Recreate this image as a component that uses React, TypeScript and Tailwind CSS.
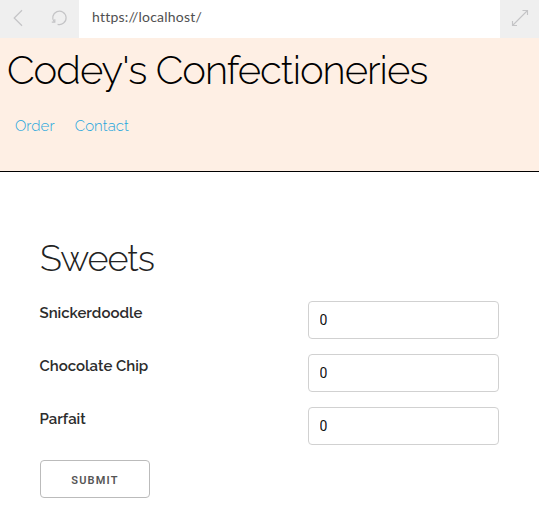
import React from 'react';

const sweets = ['Snickerdoodle', 'Chocolate Chip', 'Parfait'];

function BrowserBar() {
  return (
    <div className="flex h-[38px] bg-[#efefef] text-[#c4c4c6]">
      <div className="flex w-[79px] shrink-0">
        <svg width="79" height="38" viewBox="0 0 79 38" fill="none" stroke="currentColor">
          <path d="M22 10.3 L14.2 18 L22 25.7" strokeWidth="1.2" />
          <path d="M54.3 22.2 A6.7 6.7 0 1 1 57.6 24.3" strokeWidth="1.2" />
          <path d="M51.8 22.2 H54.8 V19.2" strokeWidth="1.2" />
        </svg>
      </div>
      <div className="flex grow items-center bg-white pb-[5px] pl-[13px] font-['Lato',sans-serif] text-[14px] tracking-[0.22px] text-[#505050]">
        https://localhost/
      </div>
      <svg width="39" height="38" viewBox="0 0 39 38" fill="none" stroke="currentColor" className="shrink-0">
        <path d="M12.5 25.5 L27.5 10.5 M22.5 10.5 H27.5 V15 M12.5 21 V25.5 H17" strokeWidth="1.1" />
      </svg>
    </div>
  );
}

export default function App() {
  return (
    <div className="h-[523px] w-[539px] overflow-hidden bg-white font-['Raleway','Lato',sans-serif] text-[#222]">
      <BrowserBar />
      <header className="h-[134px] border-b border-black bg-[#feefe4] pl-[7px]">
        <h1 className="pt-2 text-[40px] leading-[48px] font-light tracking-[-1px] whitespace-nowrap text-black">
          Codey's Confectioneries
        </h1>
        <nav className="flex gap-5 pt-5 pl-2 text-[15px] leading-6 font-light tracking-[0.1px] text-[#1ea6dc]">
          <a>Order</a>
          <a>Contact</a>
        </nav>
      </header>
      <main className="px-10 pt-[64px]">
        <h2 className="text-[36px] leading-[45px] font-light tracking-[-1px]">Sweets</h2>
        <form className="pt-5">
          {sweets.map((name) => (
            <div key={name} className="mb-[15px] flex h-[38px] justify-between">
              <label className="-ml-[0.5px] text-[15px] leading-6 font-semibold text-[#2c2c2c]">{name}</label>
              <input
                className="h-[38px] w-[191px] rounded-[4px] border border-[#d1d1d1] bg-white px-[10.5px] font-['Roboto',sans-serif] text-[14px] text-[#111]"
                defaultValue="0"
              />
            </div>
          ))}
          <button
            type="button"
            className="h-[38px] w-[110px] rounded-[4px] border border-[#bbb] pt-[4px] font-['Roboto',sans-serif] text-[11px] font-semibold tracking-[1.2px] text-[#555]"
          >
            SUBMIT
          </button>
        </form>
      </main>
    </div>
  );
}
